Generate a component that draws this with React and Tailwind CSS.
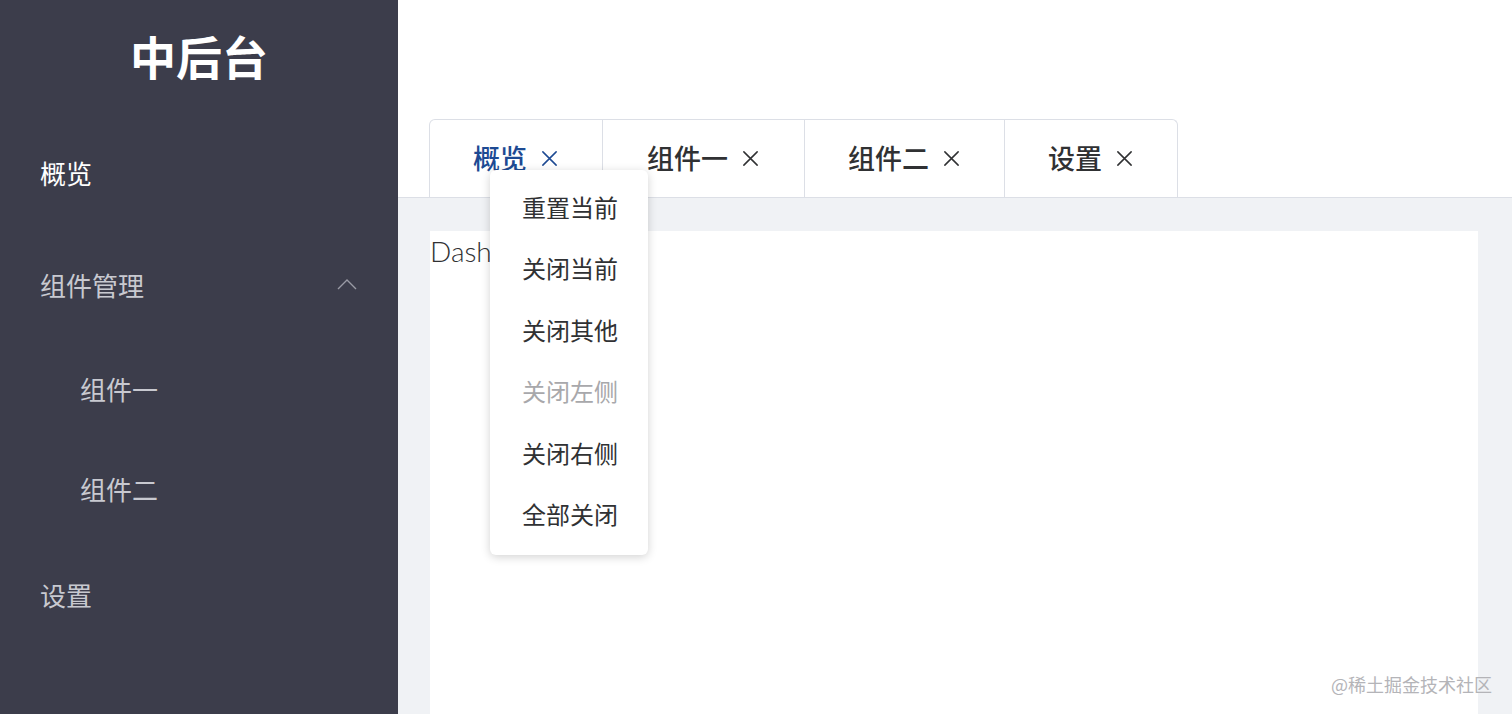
import React from "react";

const cjk = { fontFamily: '"Noto Sans CJK SC", "Noto Sans", sans-serif' };

function XIcon({ className }) {
  return (
    <svg viewBox="0 0 20 20" className={className} fill="none" stroke="currentColor" strokeWidth="1.6" strokeLinecap="round">
      <path d="M3 3 L17 17 M17 3 L3 17" />
    </svg>
  );
}

const tabs = [
  { label: "概览", w: "w-[172px]", active: true },
  { label: "组件一", w: "w-[202px]" },
  { label: "组件二", w: "w-[200px]" },
  { label: "设置", w: "w-[173px]" },
];

const menu = [
  { t: "重置当前" },
  { t: "关闭当前" },
  { t: "关闭其他" },
  { t: "关闭左侧", disabled: true },
  { t: "关闭右侧" },
  { t: "全部关闭" },
];

export default function App() {
  return (
    <div className="flex h-[714px] w-[1512px] overflow-hidden bg-white" style={cjk}>
      <aside className="w-[398px] shrink-0 bg-[#3c3d4b] flex flex-col">
        <div className="h-[120px] pb-[10px] flex items-center justify-center text-white text-[46px] font-bold leading-none">
          中后台
        </div>
        <div className="h-[104px] flex items-center pl-[40px] text-[26px] text-white">概览</div>
        <div className="h-[120px] flex items-center justify-between pl-[40px] pr-[41px] text-[26px] text-[#c8c9d0]">
          <span>组件管理</span>
          <svg viewBox="0 0 20 12" className="w-[20px] h-[12px] text-[#9a9ba5]" fill="none" stroke="currentColor" strokeWidth="1.4">
            <path d="M1 11 L10 2 L19 11" />
          </svg>
        </div>
        <div className="h-[88px] flex items-center pl-[80px] text-[26px] text-[#c8c9d0]">组件一</div>
        <div className="h-[112px] flex items-center pl-[80px] text-[26px] text-[#c8c9d0]">组件二</div>
        <div className="h-[100px] flex items-center pl-[40px] text-[26px] text-[#c8c9d0]">设置</div>
      </aside>

      <main className="relative flex-1 flex flex-col">
        <div className="h-[120px] bg-white" />
        <div className="h-[78px] flex items-end pl-[31px] border-b border-[#dcdfe6] bg-white">
          <div className="flex h-[78px] border border-b-0 border-[#dcdfe6] rounded-tl-[6px] rounded-tr-[6px]">
            {tabs.map((t, i) => (
              <div
                key={t.label}
                className={`${t.w} flex items-center justify-center gap-[13px] text-[27px] ${
                  i > 0 ? "border-l border-[#dcdfe6]" : ""
                } ${t.active ? "text-[#1d4a93] font-medium" : "text-[#303133] font-medium"}`}
              >
                <span>{t.label}</span>
                <XIcon className="w-[19px] h-[19px]" />
              </div>
            ))}
          </div>
        </div>
        <div className="flex-1 bg-[#f0f2f5] pt-[33px] pl-[32px] pr-[34px]">
          <div className="h-full bg-white">
            <div className="text-[28px] font-light text-[#303133] leading-[40px]" style={{ fontFamily: '"Lato", "Open Sans", sans-serif' }}>
              Dashboard
            </div>
          </div>
        </div>

        <div className="absolute left-[92px] top-[170px] w-[158px] bg-white rounded-[6px] shadow-[0_2px_10px_rgba(0,0,0,0.18)] pt-[6px] pb-[10px] flex flex-col">
          {menu.map((m) => (
            <div
              key={m.t}
              className={`h-[61.5px] flex items-center pl-[32px] text-[24px] ${m.disabled ? "text-[#a8a8ab]" : "text-[#303133]"}`}
            >
              {m.t}
            </div>
          ))}
        </div>

        <div className="absolute right-[20px] bottom-[16px] text-[18px] text-[#b4b4b8]">@稀土掘金技术社区</div>
      </main>
    </div>
  );
}
